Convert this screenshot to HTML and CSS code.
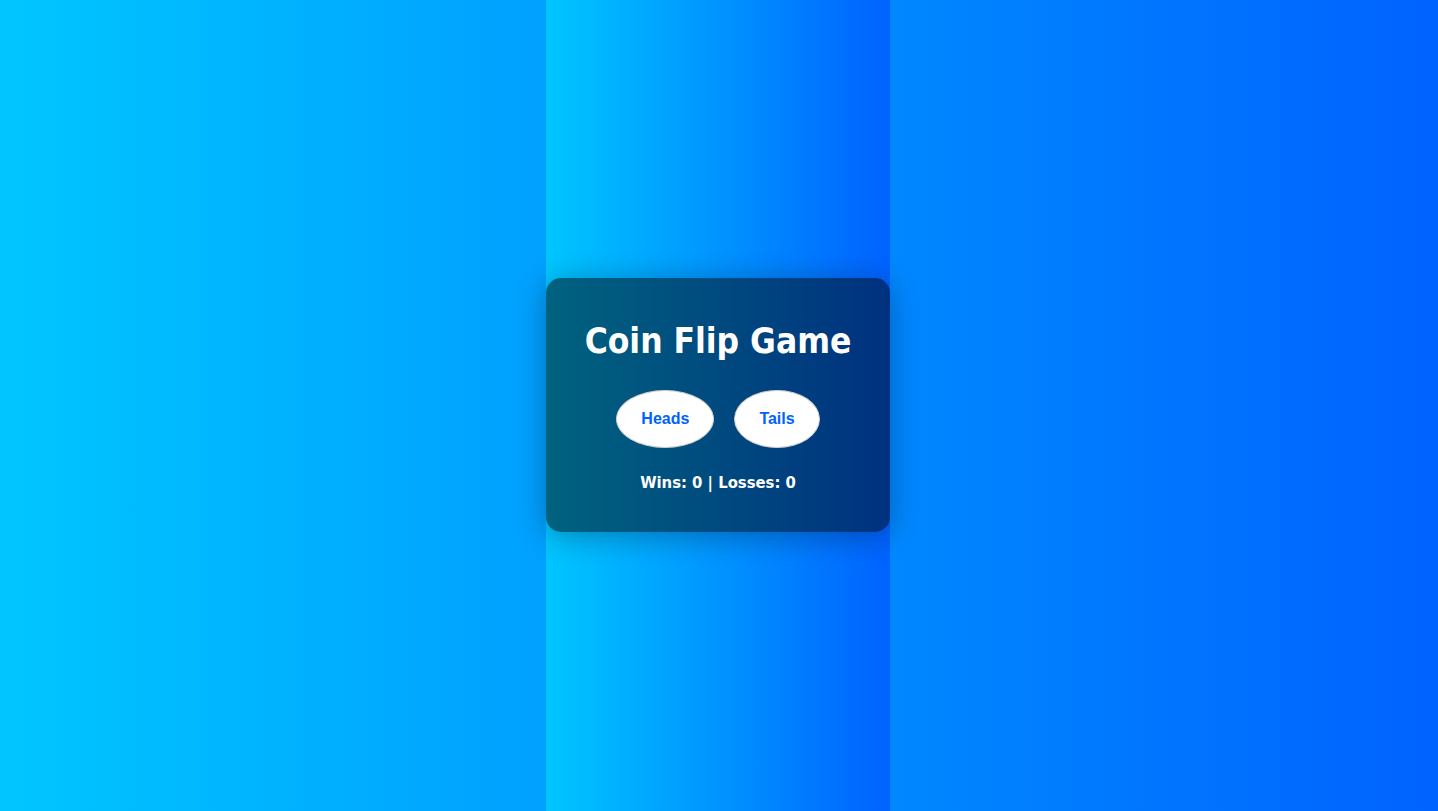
FILE: index.html
```html
<!DOCTYPE html>
<html>
<head>
<meta charset="utf-8">
<title>Coin Flip Game</title>
<link rel="stylesheet" href="styles.css">
</head>
<body>
<div class="column">
  <div class="card">
    <h1 class="title">Coin Flip Game</h1>
    <div class="choices">
      <button class="choice">Heads</button>
      <button class="choice">Tails</button>
    </div>
    <p class="score">Wins: 0 | Losses: 0</p>
  </div>
</div>
</body>
</html>
```

FILE: styles.css
```css
html, body {
  margin: 0;
  height: 100%;
}
body {
  display: flex;
  justify-content: center;
  background: linear-gradient(to right, #00c6ff, #0062ff);
  font-family: "DejaVu Sans Condensed", "DejaVu Sans", Verdana, sans-serif;
  font-stretch: condensed;
}
.column {
  width: 344px;
  height: 100vh;
  box-sizing: border-box;
  margin-right: 2px;
  padding-bottom: 2px;
  display: flex;
  align-items: center;
  background: linear-gradient(to right, #00c6ff, #0062ff);
}
.card {
  width: 100%;
  box-sizing: border-box;
  padding: 20px;
  border-radius: 15px;
  background: rgba(0, 0, 0, 0.5);
  box-shadow: 0 4px 30px rgba(0, 0, 0, 0.3);
  text-align: center;
  color: #fff;
}
.title {
  font-size: 35px;
  line-height: 40px;
  font-weight: bold;
  margin: 23px 0 29px;
}
.choices {
  display: flex;
  justify-content: center;
  gap: 20px;
}
.choice {
  font-family: "Liberation Sans", Arial, sans-serif;
  font-stretch: normal;
  font-weight: bold;
  font-size: 16px;
  color: #0062ff;
  background: #fff;
  border: 1px solid #ccc;
  border-radius: 50%;
  padding: 19px 24px;
}
.score {
  font-size: 16.5px;
  line-height: 20px;
  font-weight: bold;
  margin: 25.5px 0 18.5px;
}
```
